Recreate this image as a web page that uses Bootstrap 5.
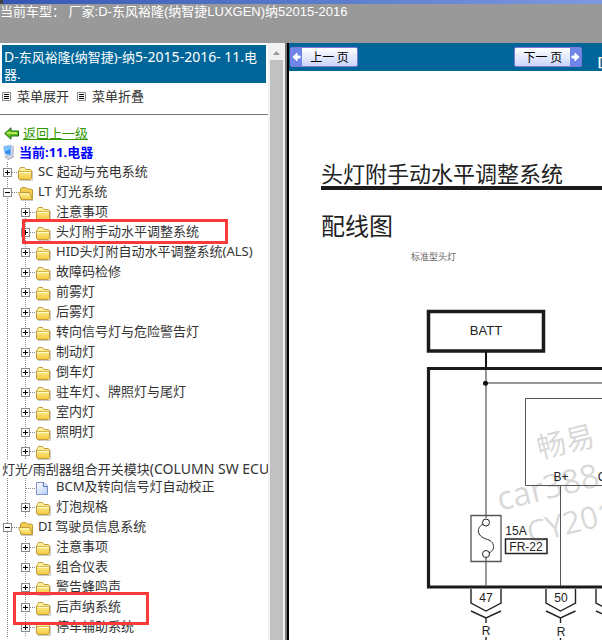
<!DOCTYPE html>
<html lang="zh-CN">
<head>
<meta charset="utf-8">
<meta name="viewport" content="width=device-width, initial-scale=1">
<title>D-东风裕隆(纳智捷LUXGEN)纳5 2015-2016</title>
<link href="https://cdn.jsdelivr.net/npm/bootstrap@5.3.0/dist/css/bootstrap.min.css" rel="stylesheet">
<style>
body{font:13px/20px "Noto Sans","Noto Sans CJK SC",sans-serif;color:#333;background:#fff}
.app-head{height:43px;background:#999;color:#fff;font-family:"Liberation Sans","Noto Sans CJK SC",sans-serif;line-height:15px}
.head-strip{height:4px;background:linear-gradient(90deg,#3558b4,#7d9ae0);border-left:3px solid #444}
.side{width:285px;flex:none}
.side-title{margin:2px 2px 0;padding:3px 2px 0;height:38px;background:#069;color:#fff;font-size:13px;line-height:17px;font-weight:400}
.latin{font-size:14px}
.menu-btn{border:0;background:none;padding:0;color:#333;line-height:20px;gap:6px}
.side-tools{padding:3px 2px 8px;border-bottom:1px solid #777}
.back-row{padding:8px 4px 0}
.back-link{color:#390}
.now-row{color:#00f;font-weight:700;line-height:18px;padding-left:2px}
.scroll-track{width:17px;flex:none;background:#f1f1f1;padding:7px 2px 0}
.scroll-thumb{background:#c1c1c1}
.divider{width:4px;flex:none;background:#000;border-left:2px solid #777}
.tree,.tree ul{list-style:none;margin:0;padding:0}
.side .tree{margin-top:1px}
.tree-item{height:20px;line-height:18px;position:relative;white-space:nowrap;display:flex}
.tree ul .tree-item{padding-left:18px}
.tree{background:repeating-linear-gradient(#888 0 1px,transparent 1px 2px) 7px 0/1px 100% no-repeat}
.tree ul{background:repeating-linear-gradient(#888 0 1px,transparent 1px 2px) 25px 0/1px 100% no-repeat}
.twist{border:0;padding:0;background:none;width:18px;height:20px;flex:none;display:block}
.tree-item svg{display:block;flex:none}
.tree-item a,.wide-item a{color:#333;text-decoration:none}
.tree-item>a{display:flex;gap:2px}
.tree ul .short-row{height:18px}
.wide-item{height:18px;line-height:18px;padding-left:2px;white-space:nowrap;background:#fff}
.tree ul .doc-row{height:19px;line-height:17px}
.red-box{position:absolute;border:3px solid #fa3a3a;z-index:2;pointer-events:none}
.box-a{left:22px;top:-3px;width:206px;height:25px}
.box-b{left:13px;top:-5px;width:136px;height:33px}
.page-bar{height:28px;padding-left:1px;background:#069;color:#fff;font-weight:700}
.pager{height:20px;padding:0;border:1px solid #7b7bd8;border-radius:2px;background:linear-gradient(#fff,#c9d4fa);color:#000;font:12px/17px "Noto Sans CJK SC",sans-serif;width:68px;display:flex;overflow:hidden}
.pager svg{background:#6f86e8;flex:none}
.pager span{flex:1}
.doc-title{font:22px/28px "Noto Sans CJK SC",sans-serif;color:#222;border-bottom:4px solid #1d1a1b;margin:87px 0 0 32px;white-space:nowrap}
.doc-sub{font:24px/32px "Noto Sans CJK SC",sans-serif;color:#222;margin:19px 0 0 32px}
.doc-note{font:9px/12px "Noto Sans CJK SC",sans-serif;color:#666;margin:10px 0 0 122px}
.wiring{display:block;margin-top:28px;font-family:"Liberation Sans",sans-serif}
</style>
<script src="https://cdn.jsdelivr.net/npm/bootstrap@5.3.0/dist/js/bootstrap.bundle.min.js"></script>
</head>
<body class="vh-100 d-flex flex-column overflow-hidden">
<svg width="0" height="0" class="position-absolute" aria-hidden="true">
<defs>
<linearGradient id="gold" x1="0" y1="0" x2="0" y2="1"><stop offset="0" stop-color="#fffbb0"/><stop offset="1" stop-color="#f3c83c"/></linearGradient>
<linearGradient id="sheet" x1="0" y1="0" x2="1" y2="1"><stop offset="0" stop-color="#fff"/><stop offset="1" stop-color="#b4cdf8"/></linearGradient>
<symbol id="plus" viewBox="0 0 18 20"><path d="M12 10.500H18" stroke="#888" stroke-dasharray="1 1"/><rect x="3.500" y="6.500" width="8" height="8" fill="#fff" stroke="#888"/><path d="M5 10.500H10M7.500 8V13" stroke="#000"/></symbol>
<symbol id="minus" viewBox="0 0 18 20"><path d="M12 10.500H18" stroke="#888" stroke-dasharray="1 1"/><rect x="3.500" y="6.500" width="8" height="8" fill="#fff" stroke="#888"/><path d="M5 10.500H10" stroke="#000"/></symbol>
<symbol id="leaf" viewBox="0 0 18 20"><path d="M8 10.500H18" stroke="#888" stroke-dasharray="1 1"/></symbol>
<symbol id="folder" viewBox="0 0 18 20"><path d="M2 18.500H14.500V9" fill="none" stroke="#ccc"/><path d="M.5 16V8.500L1.500 7.500L2.500 5.500H6.500L8 7.500H12.500L13.500 8.500V16.500L12.500 17.500H1.500Z" fill="url(#gold)" stroke="#c29a3a"/><path d="M1 9.500H13" stroke="#dcb548"/><path d="M1.500 10.500H13" stroke="#fffbd0"/></symbol>
<symbol id="open" viewBox="0 0 18 20"><path d="M3 18.500H15" stroke="#ccc"/><path d="M2.500 17V7L4 5.500H8L9.500 7H13.500L14.500 8V17Z" fill="#f0cc50" stroke="#c29a3a"/><path d="M.5 10.500H11.500L14.500 17.500H3.500Z" fill="url(#gold)" stroke="#c29a3a"/></symbol>
<symbol id="doc" viewBox="0 0 18 20"><path d="M.5 4.500H8L11.500 8V16.500H.5Z" fill="url(#sheet)" stroke="#7d93c8"/><path d="M7.500 4.500V8.500H11.500" fill="#e8f0ff" stroke="#5877c0"/></symbol>
<symbol id="list" viewBox="0 0 9 9"><path d="M.5 .5H8.500V8.500H.5Z" fill="#fff" stroke="#888"/><path d="M2 2.500H7M2 4.500H7M2 6.500H7" stroke="#000"/></symbol>
</defs>
</svg>
<header class="app-head flex-shrink-0 overflow-hidden text-nowrap"><div class="head-strip"></div>当前车型： 厂家:D-东风裕隆(纳智捷LUXGEN)纳52015-2016</header>
<div class="d-flex flex-fill overflow-hidden">
<aside class="side d-flex overflow-hidden">
<nav class="flex-fill overflow-hidden" aria-label="目录">
<h1 class="side-title"><span class="latin">D-</span>东风裕隆(纳智捷)<span class="latin">-</span>纳<span class="latin">5-2015-2016- 11.</span>电器.</h1>
<div class="side-tools d-flex gap-2">
<button class="menu-btn d-flex align-items-center"><svg width="9" height="9"><use href="#list"/></svg>菜单展开</button>
<button class="menu-btn d-flex align-items-center"><svg width="9" height="9"><use href="#list"/></svg>菜单折叠</button>
</div>
<div class="back-row d-flex align-items-center"><svg class="me-1" width="15" height="13" viewBox="0 0 15 13"><path d="M.7 6.500L7 .8V4H14.500V9H7V12.200Z" fill="#5fbf1c" stroke="#136b12"/><path d="M3 6H13" stroke="#d6f06a" stroke-width="1.500"/></svg><a class="back-link" href="#">返回上一级</a></div>
<div class="now-row d-flex align-items-center"><svg width="17" height="16" viewBox="0 0 17 16"><path d="M3 12.500L9 10.500L11.500 13L6 15.500Z" fill="#d5d6e0" stroke="#a3a6ba"/><path d="M9.500 1L12 2.500V11.500L9.500 12Z" fill="#c4c8dc"/><path d="M1 2L9.500 .5V12L2.500 10.500Z" fill="#b4cdf0"/><path d="M2 3L8.500 1.800V10.700L3.300 9.500Z" fill="#2f8df0"/><path d="M2 3L8.500 1.800V5L2.800 7.500Z" fill="#7cc4ff"/></svg>当前:11.电器</div>
<ul class="tree">
<li><div class="tree-item"><button class="twist" aria-label="展开"><svg width="18" height="20"><use href="#plus"/></svg></button><a href="#"><svg width="18" height="20"><use href="#folder"/></svg>SC 起动与充电系统</a></div></li>
<li><div class="tree-item"><button class="twist" aria-label="折叠"><svg width="18" height="20"><use href="#minus"/></svg></button><a href="#"><svg width="18" height="20"><use href="#open"/></svg>LT 灯光系统</a></div>
<ul>
<li class="tree-item"><button class="twist" aria-label="展开"><svg width="18" height="20"><use href="#plus"/></svg></button><a href="#"><svg width="18" height="20"><use href="#folder"/></svg>注意事项</a></li>
<li class="tree-item"><button class="twist" aria-label="展开"><svg width="18" height="20"><use href="#plus"/></svg></button><a href="#"><svg width="18" height="20"><use href="#folder"/></svg>头灯附手动水平调整系统</a><span class="red-box box-a"></span></li>
<li class="tree-item"><button class="twist" aria-label="展开"><svg width="18" height="20"><use href="#plus"/></svg></button><a href="#"><svg width="18" height="20"><use href="#folder"/></svg>HID头灯附自动水平调整系统(ALS)</a></li>
<li class="tree-item"><button class="twist" aria-label="展开"><svg width="18" height="20"><use href="#plus"/></svg></button><a href="#"><svg width="18" height="20"><use href="#folder"/></svg>故障码检修</a></li>
<li class="tree-item"><button class="twist" aria-label="展开"><svg width="18" height="20"><use href="#plus"/></svg></button><a href="#"><svg width="18" height="20"><use href="#folder"/></svg>前雾灯</a></li>
<li class="tree-item"><button class="twist" aria-label="展开"><svg width="18" height="20"><use href="#plus"/></svg></button><a href="#"><svg width="18" height="20"><use href="#folder"/></svg>后雾灯</a></li>
<li class="tree-item"><button class="twist" aria-label="展开"><svg width="18" height="20"><use href="#plus"/></svg></button><a href="#"><svg width="18" height="20"><use href="#folder"/></svg>转向信号灯与危险警告灯</a></li>
<li class="tree-item"><button class="twist" aria-label="展开"><svg width="18" height="20"><use href="#plus"/></svg></button><a href="#"><svg width="18" height="20"><use href="#folder"/></svg>制动灯</a></li>
<li class="tree-item"><button class="twist" aria-label="展开"><svg width="18" height="20"><use href="#plus"/></svg></button><a href="#"><svg width="18" height="20"><use href="#folder"/></svg>倒车灯</a></li>
<li class="tree-item"><button class="twist" aria-label="展开"><svg width="18" height="20"><use href="#plus"/></svg></button><a href="#"><svg width="18" height="20"><use href="#folder"/></svg>驻车灯、牌照灯与尾灯</a></li>
<li class="tree-item"><button class="twist" aria-label="展开"><svg width="18" height="20"><use href="#plus"/></svg></button><a href="#"><svg width="18" height="20"><use href="#folder"/></svg>室内灯</a></li>
<li class="tree-item"><button class="twist" aria-label="展开"><svg width="18" height="20"><use href="#plus"/></svg></button><a href="#"><svg width="18" height="20"><use href="#folder"/></svg>照明灯</a></li>
<li><div class="tree-item short-row align-items-center"><button class="twist" aria-label="展开"><svg width="18" height="20"><use href="#plus"/></svg></button><svg width="18" height="20"><use href="#folder"/></svg></div><div class="wide-item"><a href="#">灯光/雨刮器组合开关模块<span class="latin">(COLUMN SW ECU</span></a></div></li>
<li class="tree-item doc-row"><svg width="18" height="20"><use href="#leaf"/></svg><a href="#"><svg width="18" height="20"><use href="#doc"/></svg>BCM及转向信号灯自动校正</a></li>
<li class="tree-item"><button class="twist" aria-label="展开"><svg width="18" height="20"><use href="#plus"/></svg></button><a href="#"><svg width="18" height="20"><use href="#folder"/></svg>灯泡规格</a></li>
</ul></li>
<li><div class="tree-item"><button class="twist" aria-label="折叠"><svg width="18" height="20"><use href="#minus"/></svg></button><a href="#"><svg width="18" height="20"><use href="#open"/></svg>DI 驾驶员信息系统</a></div>
<ul>
<li class="tree-item"><button class="twist" aria-label="展开"><svg width="18" height="20"><use href="#plus"/></svg></button><a href="#"><svg width="18" height="20"><use href="#folder"/></svg>注意事项</a></li>
<li class="tree-item"><button class="twist" aria-label="展开"><svg width="18" height="20"><use href="#plus"/></svg></button><a href="#"><svg width="18" height="20"><use href="#folder"/></svg>组合仪表</a></li>
<li class="tree-item"><button class="twist" aria-label="展开"><svg width="18" height="20"><use href="#plus"/></svg></button><a href="#"><svg width="18" height="20"><use href="#folder"/></svg>警告蜂鸣声</a></li>
<li class="tree-item"><button class="twist" aria-label="展开"><svg width="18" height="20"><use href="#plus"/></svg></button><a href="#"><svg width="18" height="20"><use href="#folder"/></svg>后声纳系统</a><span class="red-box box-b"></span></li>
<li class="tree-item"><button class="twist" aria-label="展开"><svg width="18" height="20"><use href="#plus"/></svg></button><a href="#"><svg width="18" height="20"><use href="#folder"/></svg>停车辅助系统</a></li>
</ul></li>
</ul>
</nav>
<div class="scroll-track d-flex flex-column gap-1" aria-hidden="true"><svg class="mx-auto d-block" width="7" height="6"><path d="M0 5L3.500 1L7 5Z" fill="#999"/></svg><div class="scroll-thumb flex-fill"></div></div>
</aside>
<div class="divider"></div>
<main class="flex-fill overflow-hidden">
<div class="page-bar d-flex align-items-center text-nowrap">
<button class="pager"><svg width="11" height="18" viewBox="0 0 11 18"><path d="M2 9L6 5V8H9V10H6V13Z" fill="#fff" stroke="#fff"/></svg><span>上一 页</span></button>
<button class="pager ms-auto"><span>下一 页</span><svg width="11" height="18" viewBox="0 0 11 18"><path d="M9 9L5 5V8H2V10H5V13Z" fill="#fff" stroke="#fff"/></svg></button>
<span class="ms-2 ps-1 pt-2">&nbsp;[</span>
</div>
<h2 class="doc-title">头灯附手动水平调整系统</h2>
<h3 class="doc-sub">配线图</h3>
<p class="doc-note">标准型头灯</p>
<svg class="wiring" width="520" height="350" viewBox="289 290 520 350" role="img" aria-label="配线图" fill="none" stroke="#222">
<g fill="#999" fill-opacity=".38" stroke="none" font-family="'Open Sans','Noto Sans CJK SC',sans-serif">
<text transform="translate(540 458) rotate(-14)" font-size="29">畅易</text>
<text transform="translate(500 510) rotate(-14)" font-size="33">car388.c</text>
<text transform="translate(530 543) rotate(-14)" font-size="31">CY201</text>
</g>
<path d="M428.500 310.500H543.500V350H428.500Z" stroke="#1d1a1b" stroke-width="3.500"/>
<path d="M486 351V367" stroke="#111" stroke-width="2"/>
<path d="M810 367.500H428.500V586H810" stroke="#1d1a1b" stroke-width="3.200"/>
<path d="M486 369V517M486 557V585M486 382H810" stroke="#777" stroke-width="1.500"/>
<circle cx="485.500" cy="382.300" r="2.500" fill="#111" stroke="none"/>
<path d="M810 397.500H525.500V484.500H810M560.500 485V585" stroke="#555"/>
<path d="M471 514.500H501V560.500H471Z" stroke="#555" stroke-width="1.300"/>
<circle cx="486" cy="521.500" r="3.500"/><circle cx="486" cy="553" r="3.500"/>
<path d="M483 523C476 527 477 535 486 538C495 540 496 549 489 552"/>
<path d="M505.500 538H547V552.500H505.500Z" stroke-width="1.500"/>
<path d="M471 588V602L486 610L501 602V588M471 610L486 617L501 610M486 617V622M486 636V640M546 588V602L560.500 610L575.500 602V588M546 610L560.500 617L575.500 610M560.500 617V622M560.500 637V640M596 588V602L611 610L626 602V588M596 610L611 617L626 610" stroke-width="1.400"/>
<g fill="#222" stroke="none" text-anchor="middle" font-size="12">
<text x="486" y="334" font-size="13">BATT</text>
<text x="561" y="480">B+</text><text x="602" y="480">C</text>
<text x="516" y="534">15A</text><text x="526" y="550">FR-22</text>
<text x="486" y="601">47</text><text x="561" y="601">50</text>
<text x="486" y="634">R</text><text x="561" y="635">R</text>
</g>
</svg>
</main>
</div>
</body>
</html>
